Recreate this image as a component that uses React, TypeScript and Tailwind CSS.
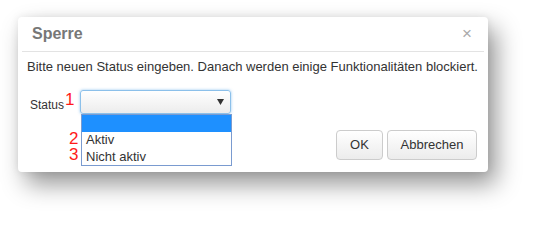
const font = { fontFamily: '"Liberation Sans", Arial, sans-serif' };

const Annotation = ({ n, className }: { n: string; className: string }) => (
  <span className={`absolute text-[17px] leading-[14px] text-[#ff1a1a] ${className}`}>{n}</span>
);

const App = () => {
  return (
    <div className="w-[537px] h-[220px] bg-white pt-[17px] pl-[18px]" style={font}>
      <div className="relative w-[470px] h-[155px] bg-white rounded-[4px] flex flex-col shadow-[8px_12px_24px_rgba(0,0,0,0.42),0_0_8px_rgba(0,0,0,0.08)]">
        {/* Header */}
        <div className="mx-[4px] h-[35px] border-b border-[#e3e3e3] flex items-center justify-between pl-[10px] pr-[12px]">
          <span className="text-[16px] font-bold text-[#777]">Sperre</span>
          <span className="text-[17px] leading-none text-[#aaa] -mt-[2px]">×</span>
        </div>

        {/* Body */}
        <div className="px-[9px] pt-[7px]">
          <p className="text-[13px] leading-[16px] text-[#333] whitespace-nowrap">
            Bitte neuen Status eingeben. Danach werden einige Funktionalitäten blockiert.
          </p>

          <div className="mt-[15px] h-[24px] flex items-center pl-[3px]">
            <span className="text-[12px] text-[#333] mt-[6px] w-[50px]">Status</span>
            <div className="relative w-[151px] h-[24px] rounded-[3px] border border-[#8cc0ea] shadow-[0_0_3px_rgba(102,175,233,0.7)] bg-gradient-to-b from-white to-[#ececec] flex items-center justify-end pr-[6px]">
              <svg width="7" height="6" viewBox="0 0 7 6">
                <path d="M0 0h7L3.5 6z" fill="#333" />
              </svg>
              {/* Open options list */}
              <div className="absolute left-[0px] top-[23px] w-[151px] bg-white border border-[#7a9bd0] text-[13px] text-[#333] z-10">
                <div className="h-[17px] bg-[#1e90ff]" />
                <div className="h-[16px] leading-[16px] pl-[4px]">Aktiv</div>
                <div className="h-[17px] leading-[17px] pl-[4px]">Nicht aktiv</div>
              </div>
            </div>
          </div>
        </div>

        {/* Footer buttons */}
        <div className="mt-auto mb-[12px] flex justify-end gap-[4px] pr-[11px]">
          <button className="w-[47px] h-[30px] rounded-[4px] border border-[#ccc] bg-gradient-to-b from-white to-[#ececec] text-[13px] text-[#333]">
            OK
          </button>
          <button className="w-[90px] h-[30px] rounded-[4px] border border-[#ccc] bg-gradient-to-b from-white to-[#ececec] text-[13px] text-[#333]">
            Abbrechen
          </button>
        </div>

        <Annotation n="1" className="left-[47px] top-[76px]" />
        <Annotation n="2" className="left-[51px] top-[115px]" />
        <Annotation n="3" className="left-[51px] top-[131px]" />
      </div>
    </div>
  );
};

export default App;
